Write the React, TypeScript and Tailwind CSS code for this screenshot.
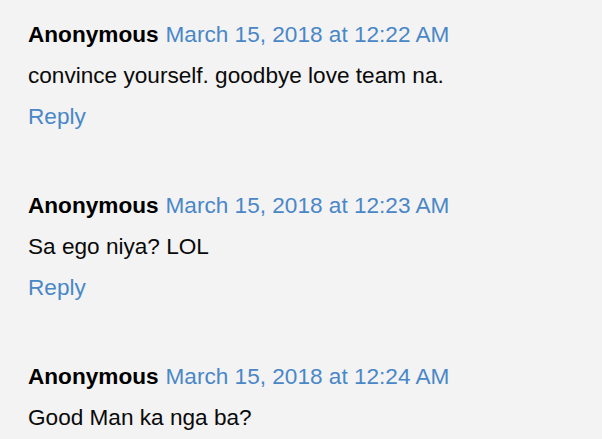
import React from "react";

const comments = [
  { time: "March 15, 2018 at 12:22 AM", text: "convince yourself. goodbye love team na." },
  { time: "March 15, 2018 at 12:23 AM", text: "Sa ego niya? LOL" },
  { time: "March 15, 2018 at 12:24 AM", text: "Good Man ka nga ba?" },
];

export default function App() {
  return (
    <div
      className="w-[602px] h-[439px] overflow-hidden bg-[#f3f3f3] pl-[28px] pt-[14px] text-[22.6px] leading-[41px] text-[#0a0a0a]"
      style={{ fontFamily: '"Liberation Sans", Arial, sans-serif' }}
    >
      <div className="flex flex-col gap-[48px]">
        {comments.map((c, i) => (
          <div key={i} className="flex flex-col">
            <div className="whitespace-nowrap">
              <span className="font-bold text-black">Anonymous</span>
              <a className="ml-[7px] text-[#4a87c7]" href="#">{c.time}</a>
            </div>
            <div className="whitespace-nowrap">{c.text}</div>
            <div>
              <a className="text-[#4a87c7]" href="#">Reply</a>
            </div>
          </div>
        ))}
      </div>
    </div>
  );
}
